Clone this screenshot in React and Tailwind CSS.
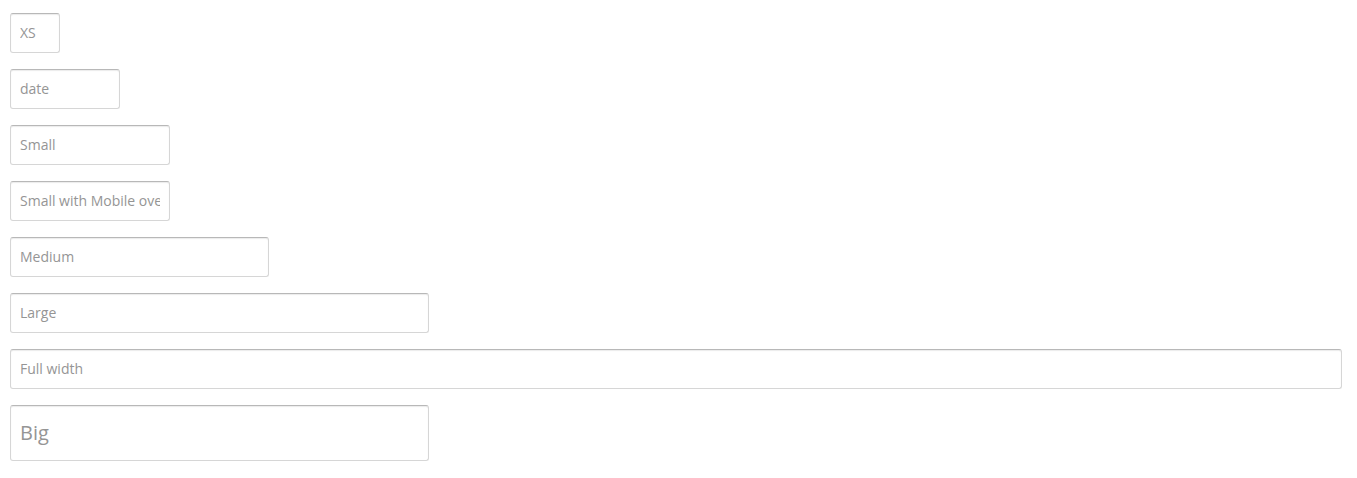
import React from "react";

const base =
  "block h-10 rounded-[3px] border border-[#d6d6d6] border-t-[#b8b8b8] bg-white px-[9px] pt-0 pb-[2px] text-[14px] text-[#555] placeholder:text-[#959595] shadow-[inset_0_1px_1px_rgba(0,0,0,0.08)] outline-none";

export default function App() {
  return (
    <div className="flex flex-col gap-4 pl-[10px] pr-[15px] pt-[13px] bg-white min-h-[478px]" style={{ fontFamily: '"Open Sans", sans-serif' }}>
      <input className={`${base} w-[50px]`} placeholder="XS" />
      <input className={`${base} w-[110px]`} placeholder="date" />
      <input className={`${base} w-[160px]`} placeholder="Small" />
      <input className={`${base} w-[160px]`} placeholder="Small with Mobile override" />
      <input className={`${base} w-[259px]`} placeholder="Medium" />
      <input className={`${base} w-[419px]`} placeholder="Large" />
      <input className={`${base} w-full`} placeholder="Full width" />
      <input className="block h-14 w-[419px] rounded-[3px] border border-[#d6d6d6] border-t-[#b8b8b8] bg-white px-[9px] pt-0 pb-[2px] text-[20px] text-[#555] placeholder:text-[#959595] shadow-[inset_0_1px_1px_rgba(0,0,0,0.08)] outline-none" placeholder="Big" />
    </div>
  );
}
